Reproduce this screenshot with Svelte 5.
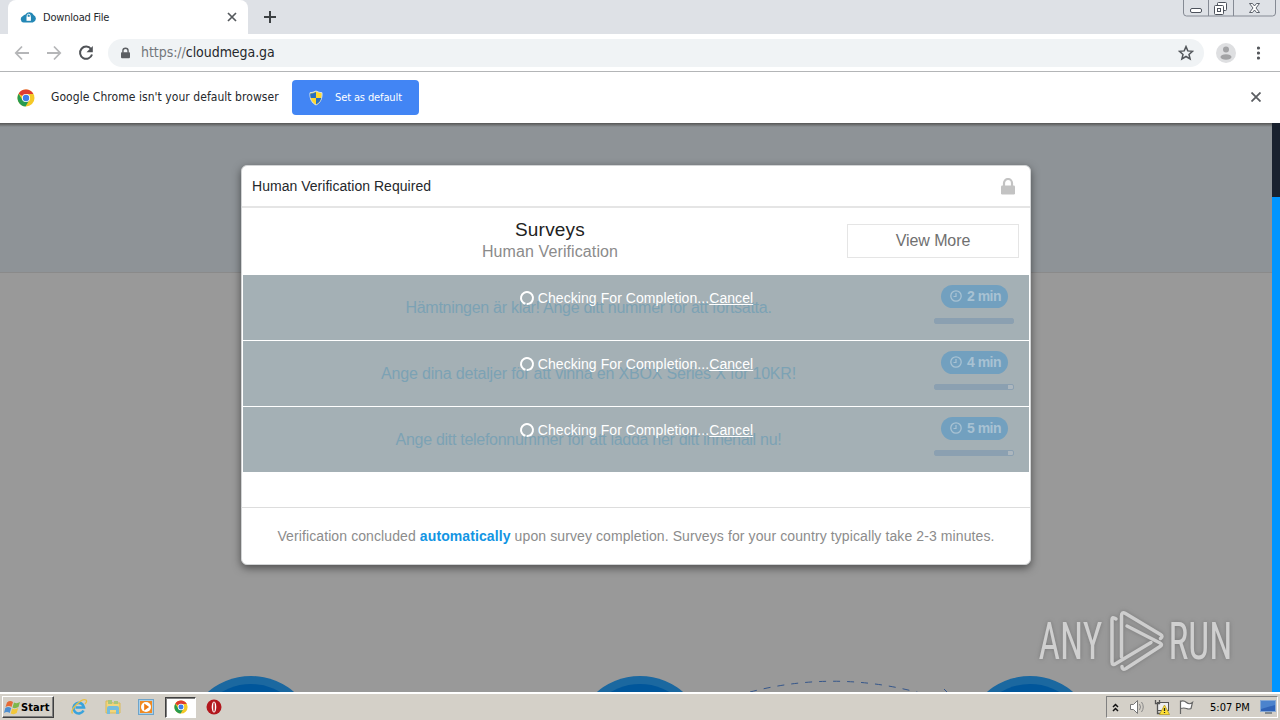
<script>
  const surveys = [
    { title: "Hämtningen är klar! Ange ditt nummer för att fortsätta.", time: "2 min", fill: 100, spacing: -0.28 },
    { title: "Ange dina detaljer för att vinna en XBOX Series X för 10KR!", time: "4 min", fill: 94, spacing: -0.17 },
    { title: "Ange ditt telefonnummer för att ladda ner ditt innehåll nu!", time: "5 min", fill: 94, spacing: -0.29 },
  ];
  const circles = [251, 640, 1030];
</script>

{#snippet chrome(size)}
  <svg width={size} height={size} viewBox="0 0 18 18">
    <circle cx="9" cy="9" r="8.5" fill="#f5c927" />
    <path d="M9 9 1.6 4.8A8.5 8.5 0 0 1 16.4 5H9z" fill="#df3b30" />
    <path d="M1.6 4.8A8.5 8.5 0 0 0 8.5 17.5l3.8-6.6L9 9l-3.5 2z" fill="#279b50" />
    <circle cx="9" cy="9" r="4.1" fill="#fff" />
    <circle cx="9" cy="9" r="3.2" fill="#3e7de9" />
  </svg>
{/snippet}

{#snippet padlock(w, h, color)}
  <svg width={w} height={h} viewBox="0 0 14 17">
    <path d="M3 8V5a4 4 0 0 1 8 0v3" fill="none" stroke={color} stroke-width="2.2" />
    <rect y="7.5" width="14" height="9" rx="1.2" fill={color} />
  </svg>
{/snippet}

<div class="screen">
  <div class="tabstrip">
    <div class="tab">
      <svg width="16" height="12" viewBox="0 0 16 12">
        <path d="M3.5 11.5a3.400 3.400 0 0 1-.6-6.500Q4 3.500 5.500 3.500A4.600 4.600 0 0 1 13.600 4a4 4 0 0 1-.8 7.500z" fill="#2387b5" />
        <path d="M7.200 6V4.700a1.500 1.500 0 0 1 3 0V6" fill="none" stroke="#fff" />
        <rect x="6.500" y="5.800" width="4.400" height="4" fill="#fff" />
      </svg>
      <span class="tab-title">Download File</span>
      <svg class="tab-close" width="10" height="10" viewBox="0 0 10 10"><path d="m1 1 8 8M9 1 1 9" stroke="#55595d" stroke-width="1.7" /></svg>
    </div>
    <svg class="plus" width="12" height="12" viewBox="0 0 12 12"><path d="M6 0v12M0 6h12" stroke="#3c4043" stroke-width="2" /></svg>
    <svg class="window-buttons" width="94" height="18" viewBox="0 0 94 18">
      <path d="M.5 0v13q0 3 3 3h86q3 0 3-3V0M25.500 0v16M50.500 0v16" fill="none" stroke="#858a94" />
      <rect x="7.500" y="8.500" width="11" height="4" rx="1.500" fill="#fff" stroke="#4d525c" />
      <rect x="34.500" y="2.500" width="9" height="8" rx="1" fill="#fff" stroke="#4d525c" />
      <rect x="31.500" y="5.500" width="9" height="9" rx="1" fill="#fff" stroke="#4d525c" />
      <rect x="34.500" y="8.500" width="3" height="3" fill="#fff" stroke="#4d525c" />
      <path d="M66.500 3.500h3l2 2.500 2-2.500h3L73 8l3.500 4.500h-3l-2-2.500-2 2.500h-3L70 8z" fill="#fff" stroke="#4d525c" stroke-width=".9" />
    </svg>
  </div>

  <div class="toolbar">
    <svg class="nav" width="16" height="16" viewBox="0 0 16 16"><path d="M15 8H2M8 1.500 1.800 8 8 14.500" fill="none" stroke="#b5b6b8" stroke-width="1.800" /></svg>
    <svg class="nav" width="16" height="16" viewBox="0 0 16 16"><path d="M1 8h13M8 1.500 14.200 8 8 14.500" fill="none" stroke="#b5b6b8" stroke-width="1.800" /></svg>
    <svg class="nav" width="16" height="16" viewBox="0 0 16 16">
      <path d="M13 4a6.100 6.100 0 1 0 1 5.500" fill="none" stroke="#505357" stroke-width="2" />
      <path d="M14.800 1v6.300H8.500z" fill="#505357" />
    </svg>
    <div class="omnibox">
      {@render padlock(9, 12, "#5b5e62")}
      <span class="url"><i>https://</i>cloudmega.ga</span>
      <svg class="star" width="16" height="16" viewBox="0 0 16 16"><path d="m8 1.600 1.800 4.300 4.700.4L11 9.400l1.100 4.600L8 11.500 3.900 14 5 9.400 1.500 6.300l4.700-.4z" fill="none" stroke="#53575b" stroke-width="1.500" /></svg>
    </div>
    <svg class="avatar" width="20" height="20" viewBox="0 0 20 20">
      <circle cx="10" cy="10" r="10" fill="#dedfe1" />
      <circle cx="10" cy="6.500" r="3" fill="#a2a3a5" />
      <ellipse cx="10" cy="14" rx="5.500" ry="2.800" fill="#a2a3a5" />
    </svg>
    <svg width="4" height="14" viewBox="0 0 4 14"><g fill="#55585c"><circle cx="1.500" cy="2" r="1.600" /><circle cx="1.500" cy="7" r="1.600" /><circle cx="1.500" cy="12" r="1.600" /></g></svg>
  </div>

  <div class="infobar">
    {@render chrome(18)}
    <span class="info-text">Google Chrome isn't your default browser</span>
    <button class="default">
      <svg width="14" height="16" viewBox="0 0 14 16">
        <path d="M7 1Q10 2.700 13 2.700C13.500 9 11 13 7 15 3 13 .500 9 1 2.700Q4 2.700 7 1z" fill="#ffd92f" stroke="#d6e2e8" />
        <path d="M7 2v6H1.700Q1 5 1.300 3.500 4 3.500 7 2zM7 8h5.300Q11 12.500 7 14.500z" fill="#286fc0" />
      </svg>
      <span>Set as default</span>
    </button>
    <svg class="info-close" width="10" height="10" viewBox="0 0 10 10"><path d="m.5.500 9 9M9.500.500l-9 9" stroke="#5b5e62" stroke-width="1.800" /></svg>
  </div>

  <div class="page">
    <svg class="backdrop" width="1280" height="569" viewBox="0 123 1280 569">
      {#each circles as cx}
        <circle {cx} cy="742" r="66" fill="#1b68a0" />
        <circle {cx} cy="742" r="58" fill="#00569b" />
      {/each}
      <path d="M750 692Q835 670 920 693" fill="none" stroke="#35568a" stroke-dasharray="7 7" />
      <path d="m944 689 3 3" stroke="#35568a" />
    </svg>
    <div class="scrollbar"></div>

    <div class="modal">
      <header>
        <span>Human Verification Required</span>
        {@render padlock(14, 17, "#c3c3c3")}
      </header>
      <div class="intro">
        <div class="heading">
          <h1>Surveys</h1>
          <p>Human Verification</p>
        </div>
        <button class="more">View More</button>
      </div>
      <div class="list">
        {#each surveys as s}
          <div class="survey">
            <span class="title" style="letter-spacing: {s.spacing}px">{s.title}</span>
            <div class="meta">
              <span class="time">
                <svg width="12" height="12" viewBox="0 0 12 12"><circle cx="6" cy="6" r="5.200" fill="none" stroke="#a8c2d3" stroke-width="1.300" /><path d="M6 3v3.500H3.500" fill="none" stroke="#a8c2d3" stroke-width="1.200" /></svg>
                {s.time}
              </span>
              <div class="track"><div class="bar" style="width: {s.fill}%"></div></div>
            </div>
            <div class="checking">
              <svg width="16" height="16" viewBox="0 0 16 16"><circle cx="8" cy="8" r="6" fill="none" stroke="#fff" stroke-width="2" stroke-dasharray="35.500 2.200" transform="rotate(105 8 8)" /></svg>
              <span>Checking For Completion...<u>Cancel</u></span>
            </div>
          </div>
        {/each}
      </div>
      <footer>Verification concluded <b>automatically</b> upon survey completion. Surveys for your country typically take 2-3 minutes.</footer>
    </div>

    <svg class="watermark" width="196" height="66" viewBox="1037 607 196 66">
      <g fill="#d0d0d0" font-family="Roboto, sans-serif" font-size="52" font-weight="400">
        <text transform="translate(1038.500 659) scale(.62 1)" textLength="103" lengthAdjust="spacingAndGlyphs">ANY</text>
        <text transform="translate(1168.500 659) scale(.62 1)" textLength="103" lengthAdjust="spacingAndGlyphs">RUN</text>
      </g>
      <g fill="none" stroke="#cecece" stroke-width="3.500" stroke-linejoin="round" stroke-linecap="round">
        <path d="M1116 619q-4-3-4 1v42q0 4 4 1.500l35-21" />
        <path d="M1121.500 657v-41q0-5 4-2.500l35 21q3 2 0 4" />
        <path d="m1127 626 33 17q3 1.500 0 3.500l-34 22q-4 2-4-2" />
      </g>
    </svg>
  </div>

  <div class="taskbar">
    <div class="start">
      <svg width="17" height="15" viewBox="0 0 17 15">
        <path d="M3 2.500Q6 0 9 2L7.500 7Q5 5 1.500 7z" fill="#e66a35" />
        <path d="M10 2.500Q13 4 16 2l-1.500 5Q11 9 8.500 7.500z" fill="#7db74b" />
        <path d="M1.300 8Q4 6 7.200 8l-1.500 5Q3 11 0 13z" fill="#4d8ed0" />
        <path d="M8.200 8.500Q11 10 14.200 8l-1.500 5Q10 15 6.700 13.500z" fill="#f2c73a" />
      </svg>
      <span>Start</span>
    </div>
    <div class="launch">
      <svg width="18" height="18" viewBox="0 0 18 18">
        <path d="M13.500 12.500A5.300 5.300 0 1 1 14 9.500H5.500" fill="none" stroke="#39a3dc" stroke-width="2.600" />
        <path d="M2.500 15.500C-1 12 12-.500 16 2c1 1 0 3-1 4" fill="none" stroke="#e8bf43" stroke-width="1.300" />
      </svg>
      <svg width="16" height="16" viewBox="0 0 16 16">
        <path d="M1 2h5l1.500 2H15v10H1z" fill="#f2d67b" stroke="#d9b958" />
        <path d="M3 1h4v4H3zM9 2h4v3H9z" fill="#a9c67b" />
        <path d="M2 15V9q0-2 2-2h8q2 0 2 2v6h-3v-4H5v4z" fill="#75bddd" />
      </svg>
      <svg width="16" height="16" viewBox="0 0 16 16">
        <rect x=".5" y=".5" width="15" height="15" fill="#a8cfe8" stroke="#6ea4ca" />
        <rect x="2" y="2" width="12" height="12" fill="#f08a22" />
        <circle cx="8" cy="8" r="5" fill="#fff" /><path d="m6.200 4.500 5 3.500-5 3.500z" fill="#ee7a12" />
      </svg>
      <div class="active">{@render chrome(14)}</div>
      <svg class="opera" width="16" height="16" viewBox="0 0 16 16"><circle cx="8" cy="8" r="7.500" fill="#b2171d" /><ellipse cx="8" cy="8" rx="2.300" ry="5.500" fill="#fff" /><ellipse cx="8" cy="8" rx="1" ry="4.800" fill="#c5454a" /></svg>
    </div>
    <div class="tray">
      <svg width="7" height="9" viewBox="0 0 7 9"><path d="m1 4 2.500-2.500L6 4M1 8l2.500-2.500L6 8" fill="none" stroke="#111" stroke-width="1.500" /></svg>
      <svg width="17" height="16" viewBox="0 0 17 16">
        <path d="M1.500 5.500h3l4-4v13l-4-4h-3z" fill="#fff" stroke="#777" /><path d="M10.500 5q2 3 0 6M12.500 3q3.500 5 0 10" fill="none" stroke="#888" />
      </svg>
      <svg width="16" height="16" viewBox="0 0 16 16">
        <rect x="3.500" y="3.500" width="11" height="8" fill="#eee" stroke="#555" />
        <path d="M1.500 1v3.500h4V1M3.500 5v9.500h3" fill="none" stroke="#555" stroke-width="1.300" />
        <path d="m10.500 6 5 9.500h-10z" fill="#ffe034" stroke="#ae941b" stroke-width=".7" /><path d="M10.500 9v3M10.500 13v1" stroke="#222" stroke-width="1.300" />
      </svg>
      <svg width="16" height="16" viewBox="0 0 16 16"><path d="M2.500 15V1.500M2.500 2.500q3-1.500 6 1t6 0l-1.500 6q-2 1-4.500 0t-6 0" fill="#fff" stroke="#666" stroke-width="1.200" /></svg>
      <span class="clock">5:07 PM</span>
      <svg class="desktop" width="16" height="14" viewBox="0 0 16 14">
        <rect x=".5" y=".5" width="15" height="11" fill="#2f63b7" stroke="#87a9d4" /><path d="M1 1h14v4L1 9z" fill="#4b83cd" /><path d="M5 13h7" stroke="#345" />
      </svg>
    </div>
  </div>
</div>

<style>
  :global(body) { margin: 0; overflow: hidden; }
  .screen {
    width: 1280px;
    height: 720px;
    display: flex;
    flex-direction: column;
    font-family: "DejaVu Sans Condensed", "DejaVu Sans", sans-serif;
    font-stretch: condensed;
    font-size: 11px;
    color: #25282c;
    white-space: nowrap;
  }
  svg { display: block; flex: none; }
  .tabstrip { height: 34px; flex: none; display: flex; background: #dee1e6; padding-left: 8px; }
  .tab {
    width: 240px;
    box-sizing: border-box;
    display: flex;
    align-items: center;
    background: #fff;
    border-radius: 8px 8px 0 0;
    padding: 0 11px 0 12px;
  }
  .tab-title { margin-left: 7px; letter-spacing: -0.2px; }
  .tab-close { margin-left: auto; }
  .plus { margin: 11px 0 0 16px; }
  .window-buttons { margin-left: auto; margin-right: 3px; }

  .toolbar { height: 37px; flex: none; display: flex; align-items: center; background: #fff; border-bottom: 1px solid #b3b5b7; padding-left: 14px; }
  .nav { margin-right: 16px; }
  .omnibox { display: flex; align-items: center; width: 1096px; height: 28px; box-sizing: border-box; border-radius: 14px; background: #f0f3f5; padding: 0 10px 0 13px; margin-left: -2px; }
  .url { font-size: 14px; line-height: 16px; margin: -2px 0 0 11px; letter-spacing: -0.05px; }
  .url i { color: #73777b; font-style: normal; }
  .star { margin-left: auto; }
  .avatar { margin: 0 21px 0 12px; }

  .infobar { height: 51px; flex: none; display: flex; align-items: center; background: #fff; padding: 0 19px 0 17px; }
  .info-text { font-size: 12px; line-height: 14px; margin: -2px 13px 0 16px; width: 228px; letter-spacing: 0.05px; }
  .default { display: flex; align-items: center; gap: 12px; width: 127px; height: 35px; padding: 0 0 0 17px; border: 0; border-radius: 4px; background: #4285f4; color: #fff; font: inherit; letter-spacing: -0.12px; }
  .info-close { margin: -1px 0 0 auto; }

  .page { position: relative; height: 569px; flex: none; background: linear-gradient(#555, transparent 4px), linear-gradient(#8e9397 0 149px, #8a8a8a 149px 150px, #999 150px); }
  .backdrop { position: absolute; left: 0; top: 0; }
  .scrollbar { position: absolute; right: 0; top: 0; width: 8px; height: 100%; background: linear-gradient(#19212e 0 74px, #0095ff 74px); }
  .watermark { position: absolute; left: 1037px; top: 484px; filter: drop-shadow(0 0 2px #777); }

  .modal {
    position: absolute;
    left: 241px;
    top: 42px;
    width: 790px;
    height: 400px;
    box-sizing: border-box;
    border: 1px solid #d2d4d5;
    border-radius: 6px;
    background: #fff;
    box-shadow: 0 3px 9px rgba(0, 0, 0, 0.5);
    font-family: "Liberation Sans", Arial, sans-serif;
    font-size: 14px;
  }
  header { display: flex; align-items: center; justify-content: space-between; height: 42px; border-bottom: 2px solid #e5e5e5; padding: 0 15px 0 10px; box-sizing: border-box; letter-spacing: 0.03px; }
  .intro { display: flex; align-items: center; height: 67px; box-sizing: border-box; padding: 0 11px 2px 0; }
  .heading { flex: 1; text-align: center; padding-left: 11px; }
  h1 { margin: 0; font-size: 19px; line-height: 22px; font-weight: 400; color: #222; letter-spacing: 0.2px; }
  p { margin: 0; font-size: 16px; line-height: 22px; color: #8b8b8b; letter-spacing: 0.1px; }
  .more { width: 172px; height: 34px; border: 1px solid #e5e5e5; background: #fff; color: #707070; font: 16px "Liberation Sans", Arial, sans-serif; padding: 0; letter-spacing: -0.1px; }
  .list { height: 197px; margin: 0 1px; }
  .survey { position: relative; display: flex; height: 65px; margin-bottom: 1px; background: #a4b0b5; }
  .title { flex: 1; text-align: center; font-size: 16px; line-height: 65px; color: #7ca2b4; }
  .meta { width: 80px; padding-top: 10px; margin-right: 15px; }
  .time { display: flex; align-items: center; gap: 5px; width: 67px; height: 23px; box-sizing: border-box; margin-left: 7px; padding: 0 0 1px 9px; border-radius: 12px; background: #72a0bf; color: #a8c2d3; font-weight: 700; font-size: 14px; letter-spacing: -0.5px; }
  .track { height: 6px; margin-top: 10px; border-radius: 2px; box-sizing: border-box; background: #adb7be; border: 1px solid #8ba0b1; }
  .bar { height: 100%; background: #8ba0b1; }
  .checking { position: absolute; inset: 0; display: flex; align-items: flex-start; justify-content: center; gap: 3px; padding-top: 15px; color: #fff; letter-spacing: 0.07px; line-height: 16px; }
  footer { height: 56px; margin-top: 35px; border-top: 1px solid #ddd; text-align: center; line-height: 57px; color: #8c8c8c; letter-spacing: 0.1px; }
  footer b { color: #1295e3; }

  .taskbar { height: 28px; flex: none; box-sizing: border-box; border-top: 2px solid #fff; background: #d4d0c8; display: flex; align-items: center; padding-left: 2px; }
  .start { display: flex; align-items: center; width: 52px; height: 22px; box-sizing: border-box; padding-left: 1px; border: 1px solid; border-color: #fff #404040 #404040 #fff; box-shadow: inset -1px -1px #808080; color: #000; font-weight: 700; letter-spacing: 0.1px; }
  .launch { display: flex; align-items: center; gap: 17px; margin-left: 16px; }
  .active { display: flex; justify-content: center; align-items: center; width: 31px; height: 21px; box-sizing: border-box; margin: 0 -6px; border: 1px solid; border-color: #404040 #fff #fff #404040; background: #fff; box-shadow: inset 1px 1px #808080; }
  .opera { margin-left: -1px; }
  .tray { display: flex; align-items: center; width: 172px; height: 22px; box-sizing: border-box; margin: 0 2px 0 auto; border: 1px solid; border-color: #808080 #fff #fff #808080; padding-left: 5px; gap: 8px; }
  .tray svg:first-child { margin-right: 2px; }
  .clock { color: #000; margin: 0 0 0 8px; }
  .desktop { margin: 0 1px 0 auto; }
</style>
